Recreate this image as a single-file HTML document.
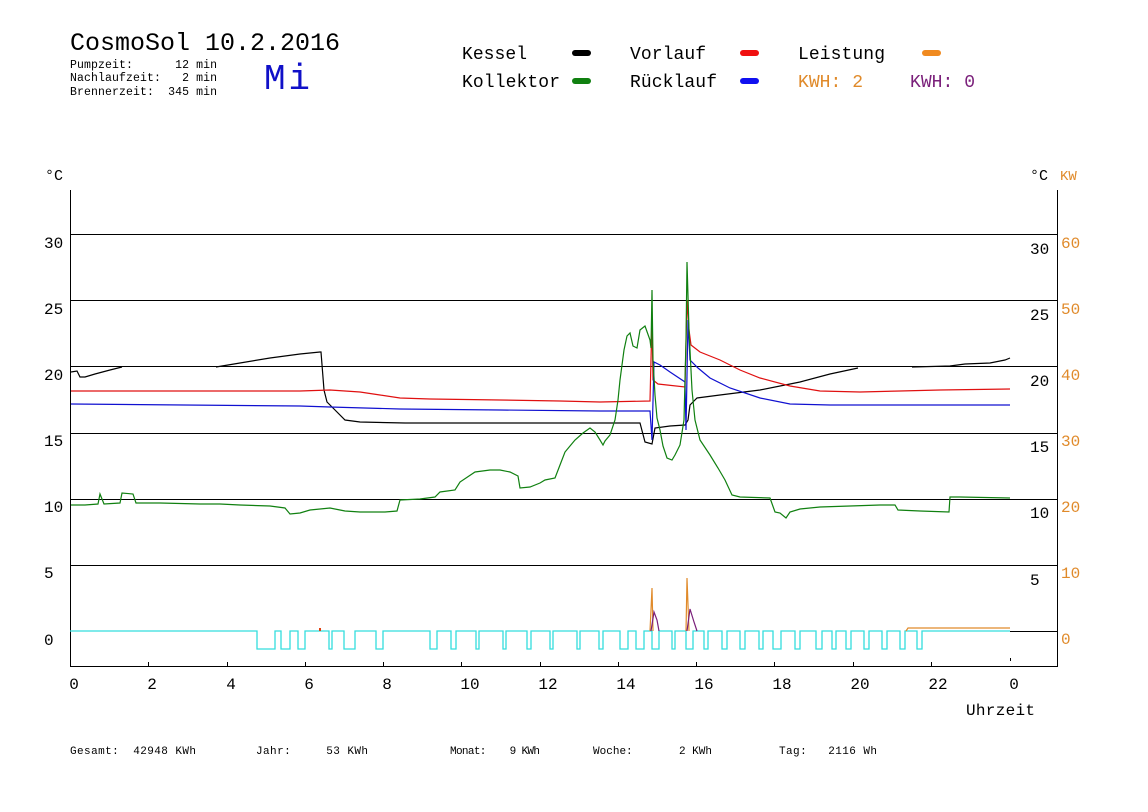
<!DOCTYPE html>
<html><head><meta charset="utf-8"><style>
html,body{margin:0;padding:0;background:#fff;}
svg{display:block;font-family:"Liberation Mono",monospace;}
.pre{white-space:pre;}
</style></head><body>
<svg width="1148" height="812" viewBox="0 0 1148 812" xmlns="http://www.w3.org/2000/svg">
<rect width="1148" height="812" fill="#fff"/>
<text x="70" y="50" font-size="25" fill="#000" textLength="270">CosmoSol 10.2.2016</text>
<text class="pre" x="70" y="68" font-size="11.5" fill="#000" textLength="147">Pumpzeit:      12 min</text>
<text class="pre" x="70" y="81" font-size="11.5" fill="#000" textLength="147">Nachlaufzeit:   2 min</text>
<text class="pre" x="70" y="95" font-size="11.5" fill="#000" textLength="147">Brennerzeit:  345 min</text>
<text x="264" y="89" font-size="36" fill="#1010c8" textLength="46">Mi</text>

<g font-size="18">
<text x="462" y="59" textLength="65">Kessel</text>
<text x="462" y="87" textLength="98">Kollektor</text>
<text x="630" y="59" textLength="76">Vorlauf</text>
<text x="630" y="87" textLength="87">Rücklauf</text>
<text x="798" y="59" textLength="87">Leistung</text>
<text class="pre" x="798" y="87" fill="#e08a2a" textLength="65">KWH: 2</text>
<text class="pre" x="910" y="87" fill="#7a1f7a" textLength="65">KWH: 0</text>
</g>
<g stroke-width="6" stroke-linecap="round">
<line x1="575" y1="53" x2="588" y2="53" stroke="#000"/>
<line x1="575" y1="81" x2="588" y2="81" stroke="#108010"/>
<line x1="743" y1="53" x2="756" y2="53" stroke="#f01010"/>
<line x1="743" y1="81" x2="756" y2="81" stroke="#1010f0"/>
<line x1="925" y1="53" x2="938" y2="53" stroke="#f08a20"/>
</g>

<text x="45" y="180" font-size="15">°C</text>
<text x="1030" y="180" font-size="15">°C</text>
<text x="1060" y="180" font-size="14" fill="#e08a2a">KW</text>

<g stroke="#000" stroke-width="1" shape-rendering="crispEdges">
<line x1="70.5" y1="190" x2="70.5" y2="667"/>
<line x1="1057.5" y1="190" x2="1057.5" y2="667"/>
<line x1="70" y1="666.5" x2="1058" y2="666.5"/>
<line x1="70" y1="234.5" x2="1057" y2="234.5"/>
<line x1="70" y1="300.5" x2="1057" y2="300.5"/>
<line x1="70" y1="366.5" x2="1057" y2="366.5"/>
<line x1="70" y1="433.5" x2="1057" y2="433.5"/>
<line x1="70" y1="499.5" x2="1057" y2="499.5"/>
<line x1="70" y1="565.5" x2="1057" y2="565.5"/>
<line x1="1057" y1="631.5" x2="1010" y2="631.5"/>
<line x1="148.5" y1="662" x2="148.5" y2="667"/><line x1="227.5" y1="662" x2="227.5" y2="667"/>
<line x1="305.5" y1="662" x2="305.5" y2="667"/><line x1="383.5" y1="662" x2="383.5" y2="667"/>
<line x1="461.5" y1="662" x2="461.5" y2="667"/><line x1="540.5" y1="662" x2="540.5" y2="667"/>
<line x1="618.5" y1="662" x2="618.5" y2="667"/><line x1="696.5" y1="662" x2="696.5" y2="667"/>
<line x1="774.5" y1="662" x2="774.5" y2="667"/><line x1="853.5" y1="662" x2="853.5" y2="667"/>
<line x1="931.5" y1="662" x2="931.5" y2="667"/><line x1="1010.5" y1="658" x2="1010.5" y2="661"/>
</g>
<g font-size="16">
<text x="44" y="248">30</text><text x="44" y="314">25</text><text x="44" y="380">20</text>
<text x="44" y="446">15</text><text x="44" y="512">10</text><text x="44" y="578">5</text><text x="44" y="645">0</text>
<text x="1030" y="254">30</text><text x="1030" y="320">25</text><text x="1030" y="386">20</text>
<text x="1030" y="452">15</text><text x="1030" y="518">10</text><text x="1030" y="585">5</text>
</g>
<g font-size="16" fill="#e08a2a">
<text x="1061" y="248">60</text><text x="1061" y="314">50</text><text x="1061" y="380">40</text>
<text x="1061" y="446">30</text><text x="1061" y="512">20</text><text x="1061" y="578">10</text><text x="1061" y="644">0</text>
</g>
<g font-size="16" text-anchor="middle">
<text x="74" y="689">0</text><text x="152" y="689">2</text><text x="231" y="689">4</text><text x="309" y="689">6</text>
<text x="387" y="689">8</text><text x="470" y="689">10</text><text x="548" y="689">12</text><text x="626" y="689">14</text>
<text x="704" y="689">16</text><text x="782" y="689">18</text><text x="860" y="689">20</text><text x="938" y="689">22</text><text x="1014" y="689">0</text>
</g>
<text x="966" y="715" font-size="16" textLength="69">Uhrzeit</text>

<g font-size="11">
<text class="pre" x="70" y="754" textLength="126">Gesamt:  42948 KWh</text>
<text class="pre" x="256" y="754" textLength="112">Jahr:     53 KWh</text>
<text class="pre" x="450" y="754" textLength="90">Monat:    9 KWh</text>
<text class="pre" x="593" y="754" textLength="119">Woche:       2 KWh</text>
<text class="pre" x="779" y="754" textLength="98">Tag:   2116 Wh</text>
</g>

<g fill="none" stroke-width="1.2">
<polyline stroke="#000" points="71,372 77,371 80,377 85,377 95,374 110,370 122,367"/>
<polyline stroke="#000" points="216,367 240,363 270,358 300,354 320,352 321,352 324,390 327,402 335,410 345,420 360,422 405,423 640,423 645,442 652,444 655,428 670,426 685,425 688,420 690,405 697,398 720,395 760,390 800,382 830,374 858,368"/>
<polyline stroke="#000" points="912,367 950,366 965,364 990,363 1005,360 1010,358"/>
<polyline stroke="#e01010" points="71,391 300,391 330,390 360,392 380,395 400,398 430,399 500,400 560,401 600,402 650,401 652,318 653,380 658,384 685,387 687,300 689,330 691,345 700,352 720,360 740,370 760,378 790,386 820,391 860,392 900,391 940,390 1010,389"/>
<polyline stroke="#1010d0" points="71,404 300,406 330,407 400,409 500,410 600,411 650,411 652,440 654,362 660,365 670,372 685,382 686,430 688,320 690,360 698,368 710,378 730,388 760,398 790,404 830,405 1010,405"/>
<polyline stroke="#108010" points="71,505 85,505 98,504 100,494 104,504 120,503 122,493 133,494 136,503 160,503 200,504 220,504 240,505 270,506 285,508 290,514 300,513 310,510 330,508 340,510 345,511 360,512 385,512 397,511 400,500 420,499 435,497 440,492 455,490 460,482 475,472 490,470 500,470 510,472 518,476 520,488 530,487 540,483 545,480 555,478 560,465 565,452 570,446 575,440 583,433 590,428 595,432 600,440 603,445 605,441 610,435 615,420 618,400 620,380 624,350 627,336 630,333 633,346 637,348 640,330 645,326 650,340 651,348 652,290 653,360 655,395 657,418 660,430 663,446 667,458 672,460 675,455 680,445 684,420 686,340 687,262 689,330 692,390 695,420 700,440 710,455 718,468 725,480 732,495 740,497 770,498 775,512 780,513 786,518 790,512 800,509 820,507 880,505 895,505 898,510 920,511 949,512 950,497 960,497 1010,498"/>
</g>
<polyline fill="none" stroke="#33dddd" stroke-width="1.3" points="70,631 257,631 257,649 275,649 275,631 281,631 281,649 290,649 290,631 298,631 298,649 305,649 305,631 329,631 329,649 332,649 332,631 344,631 344,649 355,649 355,631 376,631 376,649 383,649 383,631 430,631 430,649 437,649 437,631 451,631 451,649 456,649 456,631 476,631 476,649 479,649 479,631 503,631 503,649 506,649 506,631 527,631 527,649 531,649 531,631 550,631 550,649 553,649 553,631 577,631 577,649 580,649 580,631 599,631 599,649 603,649 603,631 620,631 620,649 628,649 628,631 636,631 636,649 644,649 644,631 652,631 652,649 659,649 659,631 672,631 672,649 675,649 675,631 686,631 686,649 693,649 693,631 704,631 704,649 708,649 708,631 722,631 722,649 727,649 727,631 740,631 740,649 745,649 745,631 759,631 759,649 763,649 763,631 773,631 773,649 781,649 781,631 795,631 795,649 800,649 800,631 816,631 816,649 822,649 822,631 832,631 832,649 836,649 836,631 846,631 846,649 851,649 851,631 864,631 864,649 869,649 869,631 882,631 882,649 887,649 887,631 900,631 900,649 905,649 905,631 917,631 917,649 922,649 922,631 1010,631"/>
<polyline fill="none" stroke="#e08a2a" stroke-width="1.2" points="906,631 908,628 1010,628"/>
<polyline fill="none" stroke="#e08a2a" stroke-width="1.2" points="650,631 652,588 653,631"/>
<polyline fill="none" stroke="#e08a2a" stroke-width="1.2" points="686,631 687,578 689,631"/>
<polyline fill="none" stroke="#7a1f7a" stroke-width="1.2" points="651,631 654,612 657,620 659,631"/>
<polyline fill="none" stroke="#7a1f7a" stroke-width="1.2" points="687,631 690,609 694,622 697,631"/>
<line x1="320" y1="628" x2="320" y2="631" stroke="#e04010" stroke-width="2"/>
</svg>
</body></html>
